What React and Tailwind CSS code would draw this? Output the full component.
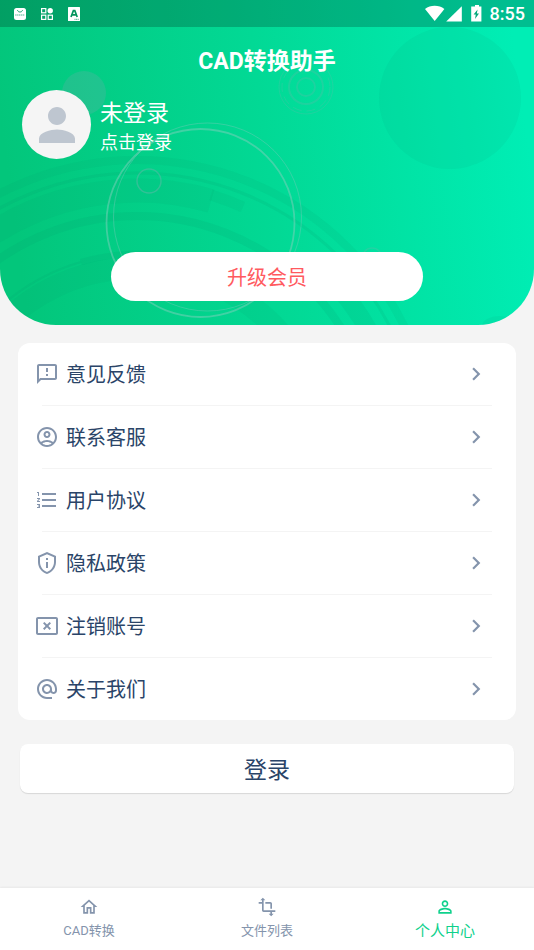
import React, { useState } from "react";
import {
  MdAlternateEmail,
  MdChevronRight,
  MdFormatListNumbered,
  MdOutlineAccountCircle,
  MdOutlineCancelPresentation,
  MdOutlineFeedback,
  MdOutlineHome,
  MdOutlinePrivacyTip,
  MdPerson,
  MdPersonOutline,
  MdTransform,
} from "react-icons/md";

const menuItems = [
  { label: "意见反馈", Icon: MdOutlineFeedback },
  { label: "联系客服", Icon: MdOutlineAccountCircle },
  { label: "用户协议", Icon: MdFormatListNumbered },
  { label: "隐私政策", Icon: MdOutlinePrivacyTip },
  { label: "注销账号", Icon: MdOutlineCancelPresentation },
  { label: "关于我们", Icon: MdAlternateEmail },
];

const tabs = [
  { id: "convert", label: "CAD转换", Icon: MdOutlineHome },
  { id: "files", label: "文件列表", Icon: MdTransform },
  { id: "me", label: "个人中心", Icon: MdPersonOutline },
];

const StatusBar = () => (
  <div className="flex h-[27px] items-center justify-between bg-black/20 pl-[14px] pr-[9px] text-white">
    <div className="flex items-center gap-[15px]">
      <svg width="12" height="12" viewBox="0 0 12 12">
        <rect width="12" height="12" rx="2.5" fill="currentColor" />
        <path d="M3.5 2.2c.4 2.4 4.6 2.4 5 0" fill="none" stroke="#04945c" strokeWidth="0.9" />
        <path d="M1.2 7h9.6" stroke="#04945c" strokeWidth="1.2" strokeDasharray="1.4 0.5" strokeOpacity="0.7" />
      </svg>
      <svg width="12" height="12" viewBox="0 0 12 12" fill="none" stroke="currentColor" strokeWidth="1.2">
        <rect x="0.6" y="0.6" width="4.2" height="4.2" />
        <circle cx="9.2" cy="2.8" r="2.7" fill="currentColor" stroke="none" />
        <rect x="0.6" y="7.2" width="4.2" height="4.2" />
        <rect x="7.2" y="7.2" width="4.2" height="4.2" />
      </svg>
      <svg width="12" height="14" viewBox="0 0 12 14">
        <rect width="12" height="14" rx="0.5" fill="currentColor" />
        <path
          d="M3 10 5.4 3.6h1.4L9.2 10M4.2 7.8h3.8"
          fill="none"
          stroke="#04945c"
          strokeWidth="1.7"
        />
        <path d="M6.5 12.3h4.5" stroke="#04945c" strokeWidth="0.8" strokeDasharray="1 0.6" />
      </svg>
    </div>
    <div className="flex items-center">
      <svg width="58" height="18" viewBox="0 0 58 18" fill="currentColor">
        <path d="M0 4C5.4-.2 14-.2 19.4 4L9.7 16z" />
        <path d="M36.8 1.2v15.4H21.2z" />
        <path d="M50 0h4v1.6h2.4v15H46.2v-15H50z" />
        <path d="M52.6 4.4 48.6 9.6h2.2l-.8 4.4 4-5.4h-2.2z" fill="#01a87a" />
      </svg>
      <span className="ml-[7px] font-[Roboto,sans-serif] text-lg leading-6 font-medium">8:55</span>
    </div>
  </div>
);

const HeaderArt = () => (
  <svg
    className="absolute inset-0 h-full w-full"
    viewBox="0 0 534 325"
    preserveAspectRatio="xMidYMid slice"
    fill="none"
    aria-hidden="true"
  >
    <defs>
      <linearGradient id="header-bg" gradientUnits="userSpaceOnUse" x1="10" y1="190" x2="525" y2="120">
        <stop offset="0" stopColor="#03c67b" />
        <stop offset="0.5" stopColor="#02d995" />
        <stop offset="1" stopColor="#00eeb5" />
      </linearGradient>
    </defs>
    <rect width="534" height="325" fill="url(#header-bg)" />

    {/* sweeping arcs */}
    <g stroke="#0a9c6c" strokeOpacity="0.13">
      <circle cx="137" cy="458" r="298" strokeWidth="8" strokeOpacity="0.1" />
      <circle cx="137" cy="458" r="285" strokeWidth="3" />
      <path d="M-100 335A267 267 0 0 1 211 201" strokeWidth="24" strokeOpacity="0.1" />
      <path d="M211 195A273 273 0 0 1 243 207" strokeWidth="11" strokeOpacity="0.1" />
      <circle cx="137" cy="458" r="242" strokeWidth="8" />
      <path d="M-40 357A204 204 0 0 1 81 262" strokeWidth="2" />
      <path d="M81 262A204 204 0 0 1 150 254" strokeWidth="6" />
      <path d="M-14 343A190 190 0 0 1 300 360" strokeWidth="22" strokeOpacity="0.1" />
      <path d="M330 278A264 264 0 0 1 390 380" strokeWidth="18" />
    </g>

    <circle cx="450" cy="98" r="71" fill="#0aa980" fillOpacity="0.12" />
    <circle cx="84" cy="93" r="22" fill="#7fa8b0" fillOpacity="0.24" />

    <g stroke="#5fb9a8" strokeOpacity="0.3">
      <circle cx="306" cy="87" r="27" strokeWidth="1" />
      <circle cx="306" cy="87" r="24" strokeWidth="1" strokeDasharray="9 5" />
      <circle cx="306" cy="87" r="17" strokeWidth="2" />
      <circle cx="306" cy="87" r="9" strokeWidth="2" />
    </g>

    <circle cx="200.5" cy="223" r="94" stroke="#7fd0bc" strokeOpacity="0.5" strokeWidth="1.8" />
    <circle cx="207.5" cy="217" r="94" stroke="#7fc8bc" strokeOpacity="0.4" />
    <circle cx="149" cy="181" r="12" stroke="#5fb9a8" strokeOpacity="0.5" strokeWidth="1.5" />
    <circle cx="372" cy="258" r="10" stroke="#5fb9a8" strokeOpacity="0.35" strokeWidth="1.5" />
    <ellipse cx="500" cy="326" rx="18" ry="10" fill="#0aa980" fillOpacity="0.12" />
  </svg>
);

const Header = () => (
  <header className="relative overflow-hidden rounded-b-[56px]">
    <HeaderArt />
    <div className="relative pb-6">
      <StatusBar />
      <h1 className="pt-[19px] text-center text-[23px] leading-8 font-bold text-white">
        CAD转换助手
      </h1>
      <button
        type="button"
        className="mt-3 ml-[22px] flex items-center gap-[9px] text-left font-['Noto_Sans_CJK_SC',sans-serif] text-white"
      >
        <span className="flex size-[69px] items-center justify-center rounded-full bg-[#f5f5f5] text-[#bec6d0]">
          <MdPerson size={54} />
        </span>
        <span className="flex flex-col">
          <span className="text-[23px] leading-8">未登录</span>
          <span className="text-lg leading-7">点击登录</span>
        </span>
      </button>
      <div className="mt-[93px] px-[111px]">
        <button
          type="button"
          className="h-[49px] w-full rounded-full bg-white pt-0.5 text-xl text-[#ff5a5f]"
        >
          升级会员
        </button>
      </div>
    </div>
  </header>
);

const Menu = () => (
  <ul className="mx-[18px] mt-[18px] rounded-xl bg-white">
    {menuItems.map(({ label, Icon }, index) => (
      <li key={label}>
        {index > 0 && <div className="mx-6 h-px bg-[#f4f4f4]" />}
        <button type="button" className="flex h-[62px] w-full items-center pr-[27px] pl-[17px]">
          <Icon size={24} className="text-[#8494ac]" />
          <span className="ml-[7px] pt-0.5 text-xl text-[#2a4468]">{label}</span>
          <MdChevronRight size={26} className="ml-auto text-[#8494ac]" />
        </button>
      </li>
    ))}
  </ul>
);

const App = () => {
  const [activeTab, setActiveTab] = useState("me");

  return (
    <div className="flex min-h-screen flex-col bg-[#f4f4f4] font-[Roboto,'Noto_Sans_CJK_SC',sans-serif]">
      <Header />

      <main className="flex-1">
        <Menu />
        <div className="mt-6 px-5">
          <button
            type="button"
            className="h-[49px] w-full rounded-lg bg-white font-['Noto_Sans_CJK_SC',sans-serif] text-[23px] text-[#2a4468] shadow-[0_1px_1px_rgba(0,0,0,0.12)]"
          >
            登录
          </button>
        </div>
      </main>

      <nav className="grid h-[62px] grid-cols-3 bg-white shadow-[0_-1px_2px_rgba(0,0,0,0.05)]">
        {tabs.map(({ id, label, Icon }) => (
          <button
            key={id}
            type="button"
            onClick={() => setActiveTab(id)}
            className={
              activeTab === id
                ? "flex flex-col items-center pt-[9px] text-[15px] text-[#0fd18c]"
                : "flex flex-col items-center pt-[9px] text-[13px] text-[#8494ac]"
            }
          >
            <Icon size={20} />
            <span className="mt-0.5 leading-6">{label}</span>
          </button>
        ))}
      </nav>
    </div>
  );
};

export default App;
